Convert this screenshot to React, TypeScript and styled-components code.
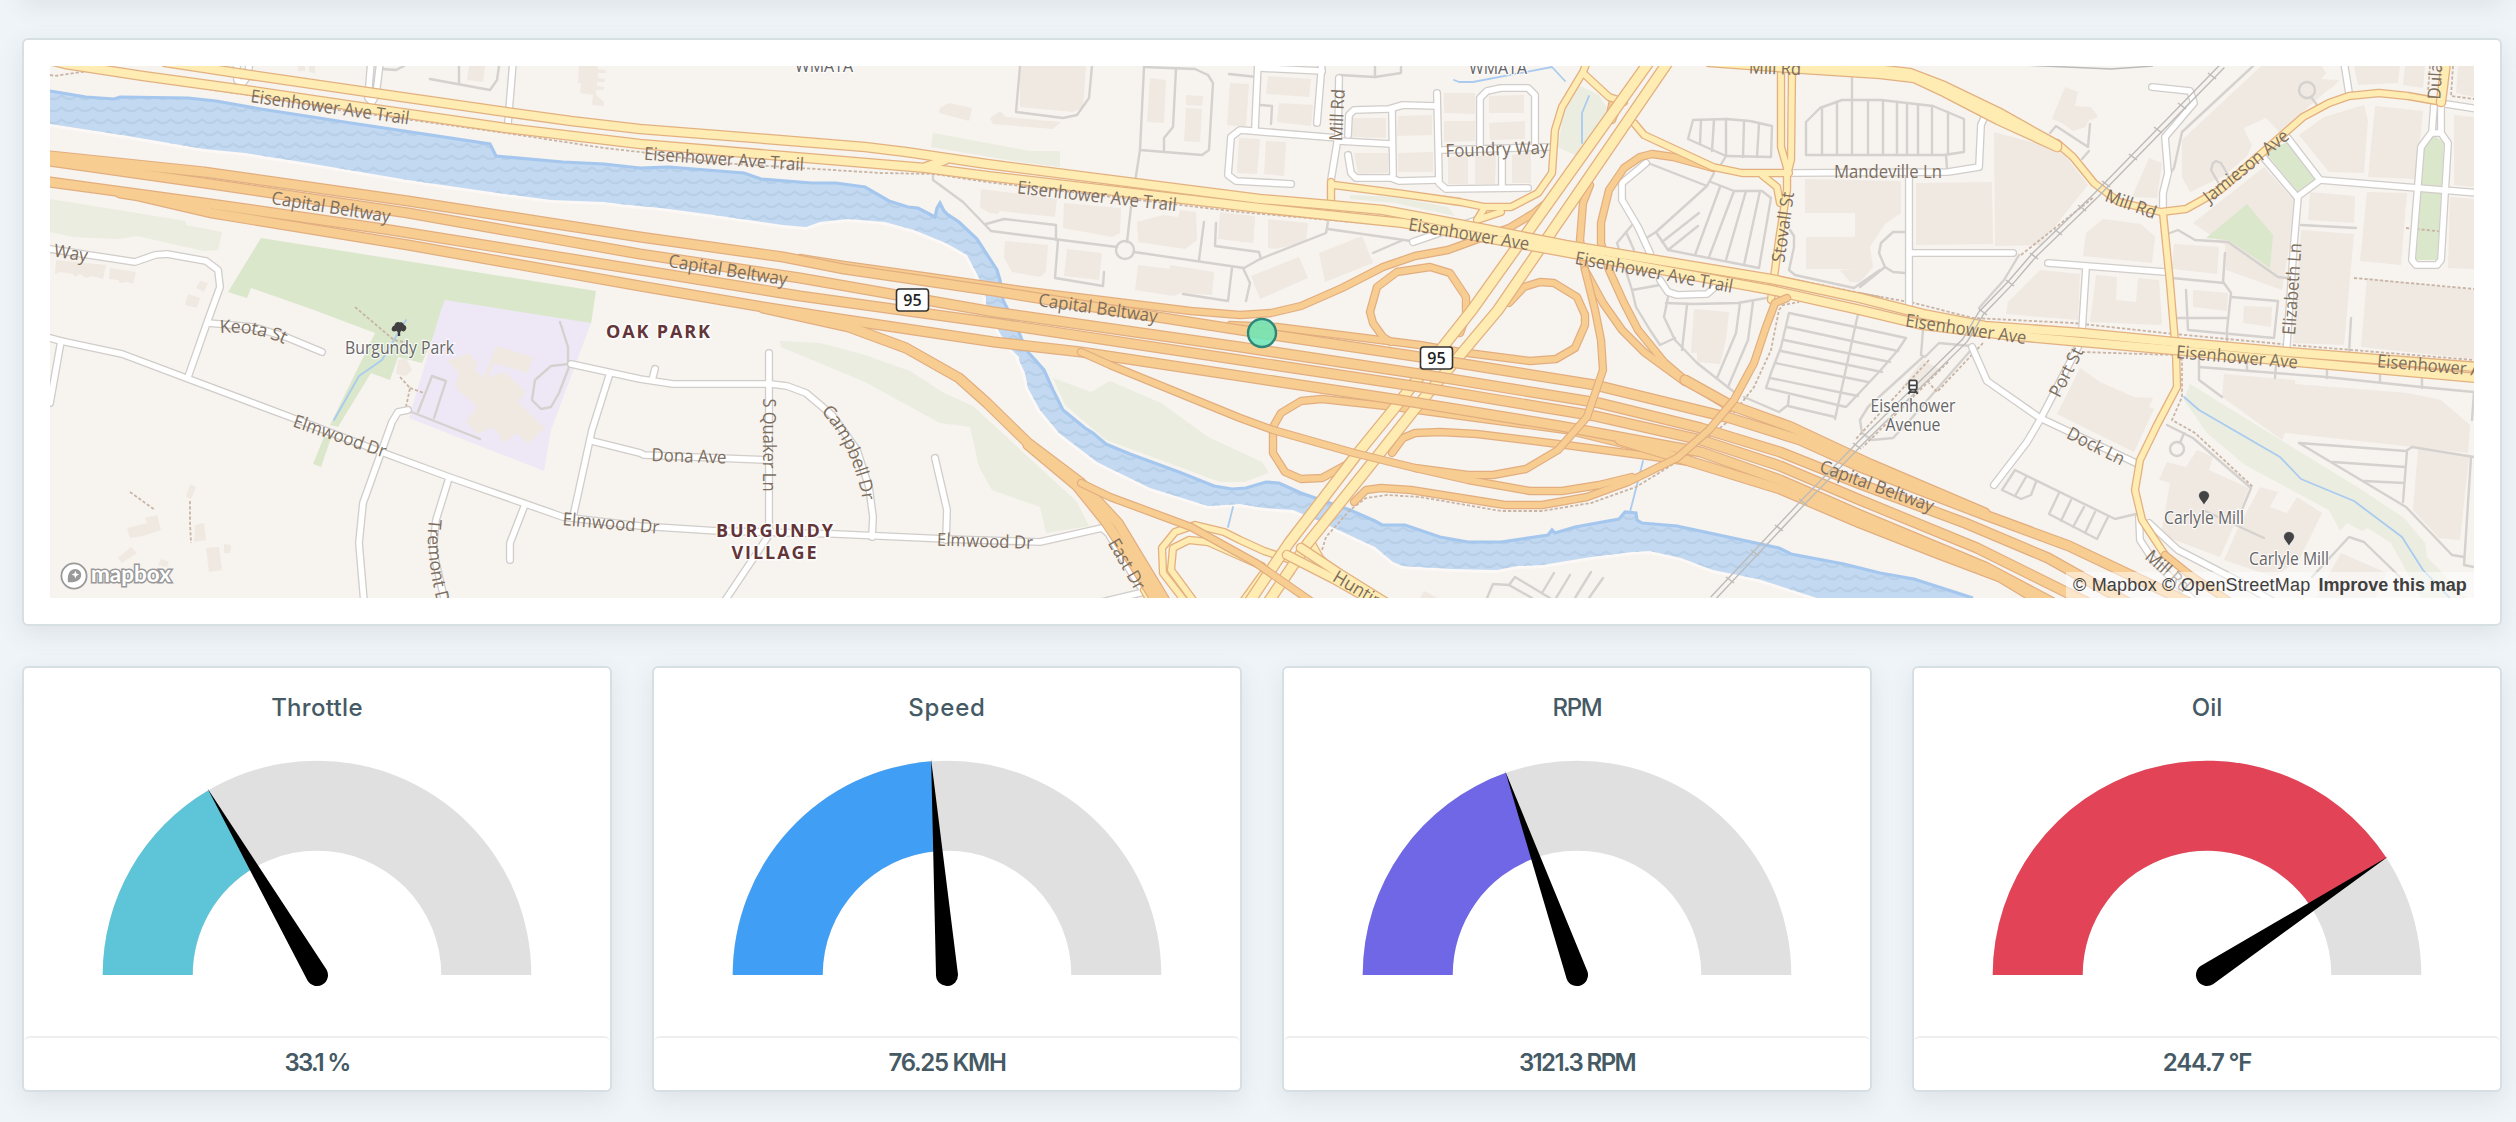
import React from 'react';
import styled, { createGlobalStyle } from 'styled-components';

const GlobalStyle = createGlobalStyle`
  *, *::before, *::after { box-sizing: border-box; }
  html, body { margin: 0; padding: 0; }
  body { background: #eff4f8; font-family: Inter, 'Open Sans', sans-serif; color: #455a64; }
`;

const Page = styled.main`
  display: flex;
  flex-direction: column;
  gap: 40px;
  height: 1122px;
  padding: 0 14px 0 22px;
  overflow: hidden;
`;

const Card = styled.section`
  width: 2480px;
  flex: none;
  background: #fff;
  border: 2px solid #d6dfe3;
  border-radius: 6px;
  box-shadow: 0 8px 24px rgba(69, 80, 90, 0.1);
`;

const PreviousCard = styled(Card)`
  height: 120px;
  margin-top: -122px;
`;

const MapCard = styled(Card)`
  height: 588px;
  padding: 26px;
`;

const MapFrame = styled.div`
  position: relative;
  height: 532px;
  overflow: hidden;
  background: #f7f3ef;
`;

const MapSvg = styled.svg`
  display: block;
  width: 2424px;
  height: 532px;
`;

const Attribution = styled.div`
  position: absolute;
  right: 0;
  bottom: 0;
  display: flex;
  align-items: center;
  gap: 8px;
  width: 408px;
  height: 26px;
  padding: 0 7px;
  background: rgba(255, 255, 255, 0.5);
  font: 18px/26px 'Liberation Sans', Arial, sans-serif;
  color: #404040;
  white-space: nowrap;
`;

const Credits = styled.span`
  letter-spacing: 0.2px;
`;

const Improve = styled.b`
  letter-spacing: -0.05px;
`;

const GaugeRow = styled.div`
  display: grid;
  grid-template-columns: repeat(4, 590px);
  gap: 40px;
`;

const GaugeCard = styled(Card)`
  display: flex;
  flex-direction: column;
  width: 590px;
  height: 426px;
`;

const GaugeTitle = styled.h2<{ $spacing: number }>`
  margin: 0;
  padding-top: 23px;
  font-size: 24px;
  line-height: 34px;
  font-weight: 450;
  text-align: center;
  letter-spacing: ${(p) => p.$spacing}px;
`;

const GaugeBody = styled.div`
  flex: 1;
  display: flex;
  justify-content: center;
`;

const GaugeFooter = styled.footer<{ $spacing: number }>`
  height: 54px;
  border-top: 2px solid #eee;
  border-radius: 6px;
  font-size: 24px;
  line-height: 50px;
  font-weight: 600;
  text-align: center;
  letter-spacing: ${(p) => p.$spacing}px;
`;

/* ---------- map data ---------- */

const WATER_TOP =
  '50,91 86,97 114,99 120,97 188,98 216,101 261,109 351,123 490,144 496,156 563,162 604,164 640,168 669,167 744,173 761,179 812,183 836,183 865,187 889,201 908,207 918,208 935,217 937,208 940,203 944,211 947,214 959,222 977,239 997,270 1000,280 1003,300 1018,330 1022,340 1028,352 1044,370 1053,390 1063,410 1085,428 1093,433 1106,444 1130,454 1179,472 1214,486 1232,489 1246,488 1266,482 1279,483 1301,493 1350,510 1375,521 1382,525 1405,525 1440,537 1468,542 1501,542 1548,535 1552,530 1555,533 1575,527 1619,519 1625,512 1636,513 1637,520 1642,523 1677,526 1705,532 1779,548 1791,554 1844,564 1880,573 1914,579 1973,598';
const WATER_BOTTOM =
  '1817,598 1758,579 1713,570 1681,558 1650,551 1632,552 1591,557 1542,565 1517,566 1497,570 1452,569 1403,566 1393,562 1375,547 1334,528 1317,520 1293,510 1264,508 1240,504 1208,506 1150,488 1097,462 1059,433 1040,410 1028,388 1025,373 1019,360 1019,357 1012,350 1001,335 986,307 986,298 979,278 967,255 946,243 914,230 885,222 848,219 820,222 806,227 783,225 714,215 661,208 620,204 604,202 551,200 498,193 408,180 302,162 245,153 204,149 122,135 50,124';

const WOODS = [
  '50,199 186,221 186,225 222,232 218,250 204,251 137,236 118,239 73,237 50,232',
  '780,341 820,343 865,355 910,371 944,393 973,406 1077,502 1089,526 1046,533 1040,507 992,490 979,467 970,427 940,423 865,382 781,347',
  '1053,378 1091,392 1110,381 1161,403 1208,437 1262,462 1269,473 1244,482 1220,482 1106,440 1065,405',
  '933,133 1030,151 1060,151 1060,167 1020,162 931,147',
  '1350,195 1395,197 1448,207 1455,216 1395,203 1350,199',
  '1580,86 1599,95 1609,112 1579,157 1558,147 1564,110',
  '2190,384 2362,490 2404,518 2425,543 2427,557 2467,598 2421,598 2391,543 2368,528 2362,531 2347,523 2340,531 2329,510 2245,465 2207,433 2184,400',
];

const PARKS = [
  '261,238 596,291 591,324 445,310 422,363 398,357 390,380 371,373 338,427 330,425 375,333 314,310 251,288 247,298 228,292',
  '324,437 331,438 321,467 313,464',
  '2247,204 2273,235 2270,268 2228,240 2206,238',
  '2287,142 2315,180 2298,192 2265,152',
  '2425,143 2435,136 2444,143 2437,260 2416,260',
];

const SCHOOL = '445,300 591,323 551,430 544,471 409,418 441,310';

const BUILDINGS = [
  '459,357 469,353 477,362 475,370 484,378 505,372 526,392 518,402 545,428 528,444 516,433 505,443 493,427 478,434 466,422 477,407 455,387 459,373 447,360',
  '496,346 533,357 528,373 494,363 488,378 484,377',
  '398,360 406,358 412,370 406,376 396,374',
  '127,528 147,523 145,518 157,515 161,530 143,536 130,538',
  '118,558 131,547 137,553 122,563',
  '161,559 169,562 167,567 158,565',
  '190,484 196,487 191,499 186,497',
  '195,525 204,523 206,540 194,542',
  '206,548 219,547 222,570 209,572',
  '224,544 231,545 230,553 224,553',
  '56,260 106,265 103,279 96,277 92,276 86,278 80,274 75,277 73,274 60,272 55,274',
  '110,268 136,272 133,284 128,282 120,283 118,280 109,279',
  '200,281 208,283 204,292 196,288',
  '188,294 200,298 197,308 185,305',
  '469,66 485,66 483,82 467,80',
  '579,66 598,66 598,69 606,70 606,73 598,73 598,78 605,79 605,82 597,82 597,86 604,87 604,90 596,90 596,95 604,102 604,106 592,105 593,95 580,93 581,83 578,83',
  '298,66 305,66 305,71 298,71',
  '309,66 315,66 315,73 309,72',
  '1020,66 1086,66 1083,107 1073,112 1020,107',
  '940,108 949,103 972,108 969,121 939,113',
  '990,118 1000,111 1006,117 1061,122 1053,129 993,124',
  '981,189 1057,199 1055,217 1000,211 998,214 989,213 980,207',
  '1064,203 1121,208 1120,233 1112,237 1063,228',
  '1137,222 1163,215 1178,217 1180,210 1196,212 1197,240 1185,249 1138,242',
  '1220,212 1255,216 1253,243 1218,239',
  '1005,241 1048,245 1046,272 1040,277 1012,272 1004,258',
  '1067,249 1102,253 1099,280 1064,276',
  '1138,265 1170,269 1170,265 1214,272 1212,295 1181,293 1174,296 1135,290',
  '1150,78 1166,80 1164,123 1147,122',
  '1186,95 1203,96 1202,106 1186,105',
  '1186,108 1202,109 1200,142 1184,141',
  '1230,83 1249,84 1246,127 1227,125',
  '1239,138 1260,139 1257,174 1237,173',
  '1268,76 1311,79 1309,97 1266,94',
  '1279,103 1313,105 1311,126 1277,122',
  '1266,141 1286,142 1284,176 1264,174',
  '1353,118 1386,118 1386,138 1352,137',
  '1398,116 1432,115 1432,135 1397,136',
  '1354,153 1388,153 1388,173 1358,174',
  '1398,153 1433,152 1433,172 1398,172',
  '1444,93 1475,93 1475,114 1444,113',
  '1444,121 1475,121 1475,141 1444,142',
  '1489,96 1524,95 1524,113 1489,113',
  '1489,123 1525,121 1525,139 1490,140',
  '1448,157 1468,156 1468,184 1448,184',
  '1475,156 1496,156 1495,184 1475,184',
  '1512,155 1531,152 1531,183 1512,183',
  '1268,219 1308,223 1306,242 1276,249 1268,248',
  '1240,215 1255,217 1253,242 1240,242',
  '1319,253 1362,236 1373,263 1325,282',
  '1251,276 1299,257 1308,278 1260,299',
  '1694,309 1729,312 1726,340 1720,364 1697,362 1697,353 1691,353',
  '1805,179 1901,181 1901,213 1885,224 1870,247 1873,267 1860,282 1850,282 1840,270 1855,269 1855,213 1805,213',
  '1806,237 1855,237 1855,269 1806,269',
  '1916,183 1992,182 1993,244 1916,245',
  '1994,132 2061,150 2088,185 2040,245 1995,246',
  '2065,87 2078,92 2075,106 2091,107 2098,117 2088,121 2086,127 2073,131 2062,123 2052,119',
  '2149,158 2162,163 2157,198 2132,197',
  '2261,66 2322,66 2326,73 2321,79 2339,80 2334,86 2324,93 2303,112 2281,134 2266,118 2244,128 2246,134 2252,145 2247,156 2224,176 2190,192 2182,177 2182,140',
  '2354,66 2400,66 2398,83 2358,85',
  '2405,66 2425,66 2423,88 2403,85',
  '2458,66 2474,66 2474,97 2456,93',
  '2364,105 2368,120 2364,173 2329,172 2299,135 2324,117',
  '2375,106 2423,111 2416,179 2368,177',
  '2454,115 2474,117 2474,187 2454,185',
  '2264,167 2294,200 2289,247 2282,290 2226,270 2225,245 2193,223',
  '2310,192 2355,196 2354,223 2308,220',
  '2367,192 2407,193 2401,265 2360,261',
  '2450,197 2474,199 2474,269 2448,268',
  '2301,230 2354,234 2344,345 2293,343',
  '2367,278 2474,290 2474,359 2361,347',
  '2103,219 2141,224 2155,237 2152,263 2083,256 2086,233',
  '2040,270 2080,274 2078,320 2006,314 2008,302',
  '2096,275 2117,277 2116,300 2136,302 2138,278 2159,280 2162,322 2161,325 2090,322',
  '2174,244 2219,247 2217,274 2172,269',
  '2193,290 2228,293 2227,311 2193,307',
  '2244,306 2272,307 2271,327 2243,323',
  '2080,368 2100,382 2134,397 2153,398 2149,407 2154,409 2134,452 2057,414',
  '2224,374 2295,380 2295,384 2408,393 2441,400 2470,425 2468,453 2285,433 2282,440 2222,397',
  '2418,449 2469,457 2460,540 2439,538 2413,510',
  '2167,462 2186,467 2197,450 2213,457 2209,470 2249,488 2241,508 2232,530 2220,557 2161,535 2170,483 2159,480',
  '2260,487 2278,492 2270,507 2287,513 2297,497 2322,513 2299,560 2274,577 2224,560 2237,530',
  '2341,553 2387,573 2375,598 2316,598',
  '1923,360 1941,370 1919,390 1902,387',
  '1424,591 1438,598 1420,598',
];

const STREAMS = [
  '406,320 394,340 382,360 359,376 334,420',
  '1454,80 1459,82 1473,82 1552,67 1565,81',
  '1589,96 1582,113 1582,143',
  '2184,397 2199,410 2280,457 2301,479 2354,501 2402,537 2423,570 2450,598',
  '1643,461 1630,512',
  '1233,507 1228,527',
];

const SERVICE = [
  '560,322 568,347 568,365',
  '569,364 551,366 535,380 532,400 541,409 551,407 559,393 569,367',
  '409,411 480,439',
  '418,412 432,376 446,381 434,418',
  '1806,155 1806,122 1820,108 1842,100 1881,100 1933,106 1964,119 1964,152 1944,155 1806,155',
  '1822,107 1822,155', '1837,102 1837,155', '1852,78 1852,155', '1868,100 1868,155', '1883,100 1883,155',
  '1897,102 1897,155', '1907,103 1907,155', '1918,105 1918,155', '1932,106 1932,155', '1948,112 1948,154', '1946,155 1947,168',
  '1693,120 1726,119 1750,121 1772,126 1771,157 1726,156 1688,139 1693,120',
  '1701,120 1700,144', '1714,120 1712,151', '1726,119 1726,156', '1744,121 1743,157', '1759,124 1757,157', '1726,156 1720,166',
  '1648,163 1707,186 1714,173',
  '1711,182 1734,191 1762,191 1771,198 1759,268 1668,250 1656,232 1707,186',
  '1695,255 1720,187', '1709,257 1734,191', '1726,260 1746,191', '1744,265 1760,191', '1662,242 1699,213', '1668,250 1698,226',
  '1648,237 1656,232',
  '1632,225 1617,243 1632,290 1636,307 1650,330 1660,345 1675,338',
  '1626,232 1634,250', '1632,290 1660,285',
  '1666,303 1693,304 1738,303 1766,298',
  '1668,297 1664,317 1675,340 1697,363 1734,392',
  '1687,305 1682,350', '1740,303 1736,333 1717,378', '1753,302 1748,340 1728,387',
  '1789,313 1860,328 1906,338 1898,350 1879,372 1846,407 1766,388 1771,373 1781,347 1789,313',
  '1787,327 1898,351', '1784,340 1890,362', '1781,351 1882,372', '1775,363 1868,382', '1770,378 1858,396', '1858,314 1835,419',
  '1744,397 1779,412 1788,405 1789,396', '1788,406 1835,417',
  '1020,66 1016,112 1063,118 1077,115 1089,98 1092,66',
  '1144,67 1140,150 1135,182',
  '1144,67 1195,69 1208,75 1213,83 1209,150 1202,155 1140,150',
  '1176,69 1173,127 1164,138 1164,150',
  '933,174 933,180 963,202 991,231 1117,247',
  '986,224 1004,219 1056,225 1056,240',
  '1058,240 1055,278 1103,286 1104,272',
  '1131,207 1127,242', '1134,252 1244,268 1260,259 1326,233 1328,222',
  '1204,222 1199,260', '1216,223 1215,246 1259,252 1261,259',
  '1328,229 1411,241', '1403,240 1373,253',
  '1232,268 1228,301 1183,294', '1243,268 1250,283 1246,301',
  '1229,74 1257,77', '1260,105 1272,106 1271,124',
  '1339,75 1375,77 1401,73 1401,67', '1375,66 1375,77',
  '459,66 459,83', '430,79 490,90 497,80 499,66', '382,69 396,70 404,66',
  '1790,230 1794,236 1794,247 1789,270 1795,275 1854,288 1880,270',
  '1905,232 1893,232 1881,243 1879,253 1885,267 1893,272 1905,273', '1885,267 1860,287',
  '2253,66 2182,132 2174,168 2171,172',
  '2050,133 2056,126 2088,147 2090,124', '2089,151 2082,159',
  '2311,97 2317,105', '2218,182 2211,170 2213,163 2216,161 2221,163 2228,175',
  '2170,233 2178,230 2195,240 2228,242 2278,277 2287,278',
  '2172,278 2224,283 2231,293 2227,330 2227,343', '2225,253 2223,283',
  '2231,297 2278,301 2274,338 2188,330 2186,290', '2176,318 2228,318', '2301,225 2356,228', '2351,318 2349,353',
  '2019,255 2004,280 1979,308',
  '2199,360 2199,380 2222,397', '2199,367 2326,377 2421,387 2474,392',
  '2247,363 2247,371', '2276,365 2275,378', '2327,368 2327,378', '2380,375 2380,382', '2422,378 2422,388',
  '2167,425 2193,438 2251,488 2241,512', '2180,443 2184,433',
  '2203,510 2264,538',
  '2299,443 2406,507 2452,555 2464,557', '2299,443 2406,451 2412,447 2474,457',
  '2333,462 2405,467', '2364,481 2404,483', '2407,451 2403,502', '2471,457 2464,565 2474,567',
  '2474,392 2472,420',
  '2312,577 2349,537 2364,542 2400,577',
  '2015,470 2115,519 2136,514', '2015,470 2002,490 2021,499 2031,495 2036,482', '2026,477 2015,496',
  '2059,493 2049,514 2097,539 2108,517', '2071,500 2061,521', '2084,507 2073,527', '2095,512 2085,533',
  '1923,330 1921,355 1925,357 1939,343 1971,346',
  '1971,350 1910,420 1893,438 1872,440 1862,433 1860,420 1868,407 1923,357',
  '1487,598 1493,584 1509,585 1515,577 1550,598', '1554,573 1542,593', '1570,575 1556,598', '1591,572 1575,598', '1603,578 1589,598', '1509,585 1532,598',
];

const SERVICE_LOOPS: [number, number, number][] = [
  [1125, 250, 9],
  [2307, 90, 8],
  [2177, 449, 7],
];

const TRAILS = [
  '50,75 55,76 88,71 261,97 339,110 506,133 604,148 640,152 720,163 881,173 934,174 987,182 1240,212 1330,220 1411,227',
  '1781,277 1880,297',
  '1860,293 1914,303 1973,318 2073,323 2165,333 2291,345 2474,360',
  '1322,550 1326,537 1350,510 1366,498 1387,495 1420,497 1501,511 1542,511 1591,503 1636,487 1685,457 1726,423 1754,387 1771,350 1779,310 1783,305 1799,302',
  '1271,598 1295,572',
  '2082,352 2174,355 2182,360 2182,397 2172,420 2195,433 2253,487',
  '2021,255 2094,197', '2354,278 2474,289', '2406,228 2447,232',
  '2453,66 2451,96 2474,99', '2430,66 2428,91',
  '355,307 394,340 404,342', '400,377 410,388 406,407', '410,388 424,393',
  '130,492 155,510', '190,501 190,523 191,543',
  '1983,343 1937,392 1929,383', '1929,360 1855,440', '1948,362 1863,447',
];

const RAIL = '2222,66 2096,195 2034,255 2010,283 1981,313 1965,340 1860,443 1803,502 1713,598';
const RAIL_TIES: [number, number][] = [
  [2212, 76], [2182, 106], [2158, 130], [2133, 157], [2106, 184], [2082, 208], [2058, 232], [2034, 256], [2010, 283], [1983, 312], [1857, 446], [1803, 502], [1779, 528], [1755, 553], [1730, 580],
];

const STREETS = [
  '50,249 135,262 155,255 167,254 206,261 218,270 220,287 208,320 188,377',
  '50,338 61,341 122,354 298,420 384,453 449,477 563,517 640,526 718,531 836,534 946,539 1040,542 1102,528 1108,533 1134,577 1144,592 1102,602',
  '61,341 50,403',
  '208,323 253,327 286,337 322,352',
  '408,410 398,412 392,422 363,503 359,543 364,602',
  '449,478 436,520 433,550 445,602',
  '524,507 510,543 510,560',
  '571,364 640,379 673,384 771,384 787,386 806,393 832,415 857,450 869,487 873,517 872,537',
  '610,373 592,430 573,517',
  '592,441 640,453 644,455 693,457 767,460',
  '769,353 769,527', '655,369 652,380', '767,538 724,602', '935,458 947,510 946,540',
  '237,62 237,80 242,84 247,77 250,62', '371,62 368,98 372,102 376,95 380,62', '513,62 508,123',
  '1339,78 1338,137 1331,180',
  '1338,138 1240,130 1231,137 1228,175 1236,181 1291,184',
  '1258,62 1255,128', '1260,68 1322,71', '1322,62 1317,123', '1338,141 1391,144',
  '1348,135 1349,115 1354,110 1389,109 1403,105 1436,106',
  '1392,110 1393,175',
  '1348,155 1351,173 1356,178 1391,178 1399,181 1438,180',
  '1437,93 1439,183 1446,189 1528,188', '1442,150 1548,147',
  '1480,147 1480,98 1487,91 1501,88 1528,88 1535,95 1535,148', '1502,148 1502,187',
  '1413,242 1477,220',
  '1646,163 1622,183 1622,200 1638,227 1650,253', '1660,280 1668,292 1677,295 1707,294 1715,287',
  '1791,173 1948,172 1979,167 1981,125 1988,109',
  '1909,177 1909,307', '1910,253 2013,253', '2048,263 2165,272',
  '2086,268 2082,330 2080,343 2040,420 2027,442 1994,485',
  '1972,347 1987,381 2040,418 2138,464',
  '2152,87 2190,91 2194,103 2165,137 2168,173 2163,193 2163,210',
  '2344,62 2349,93', '2446,104 2478,109',
  '2287,137 2320,180 2478,193', '2264,158 2297,197 2320,180', '2298,197 2294,243 2286,357',
  '2434,105 2432,132 2421,147 2412,260 2416,265 2437,265 2441,260 2448,143 2441,133 2441,105', '2432,133 2441,133',
  '2139,517 2140,540 2153,560 2195,602', '2149,523 2178,550 2236,580 2274,602',
];

const LOWER_RAMPS = [
  '1391,342 1383,337 1373,323 1370,312 1377,287 1397,272 1430,267 1450,273 1466,297 1466,317 1460,333',
  '1230,325 1277,327 1420,345 1460,352 1530,361 1556,359 1575,348 1585,325 1585,315 1577,297 1554,283 1540,282 1524,287 1509,303',
  '800,258 844,265 930,277 1028,291 1191,311 1240,315 1271,313 1301,306 1342,288 1383,267 1415,256 1448,250 1481,238 1509,228 1534,213 1550,200 1587,147 1609,120 1613,100',
  '1689,458 1648,450 1566,430 1469,417 1395,407 1322,399 1301,401 1281,413 1273,427 1273,453 1285,472 1301,479 1322,478 1346,465 1360,450',
  '1690,462 1648,456 1566,445 1477,434 1440,432 1415,433 1403,438 1392,453',
  '1713,168 1673,157 1652,154 1640,157 1624,168 1609,190 1601,223 1601,243 1609,270 1624,303 1638,330 1664,362 1685,380 1730,408',
  '1590,185 1583,203 1580,240 1585,270 1603,303 1622,330 1644,352 1685,382',
];

const YELLOW_MINOR = [
  '1334,185 1403,194 1460,202 1485,207 1511,207 1538,193 1552,173 1555,130 1562,107 1583,72 1587,62',
  '1331,182 1331,213', '1485,207 1477,220 1501,212',
  '1583,73 1609,97 1624,102', '1612,120 1620,100',
  '1634,123 1644,135 1713,167 1742,173 1789,173',
  '1781,72 1781,147 1787,168 1787,190 1779,240 1771,300', '1792,72 1791,160 1787,175',
  '1762,175 1777,187 1780,203',
  '2057,143 2073,157 2094,183 2119,202 2161,212 2186,209 2220,190 2303,117 2329,103 2349,96 2379,93 2408,96 2442,102',
  '2163,213 2170,283 2174,330 2176,353 2177,387 2157,425 2140,460 2135,490 2142,520 2165,555',
  '1300,563 1264,551 1240,540 1224,532 1195,525 1175,532 1162,548 1163,573 1187,604',
  '1262,566 1253,562 1208,542 1189,540 1173,548 1171,570 1196,604',
  '1310,540 1320,558 1334,572', '1144,590 1152,604', '1241,604 1262,575',
];

const YELLOW_MAJOR = [
  '1709,62 1803,69 1880,74 1914,78 1944,92 1998,120 2057,147',
  '1709,58 1803,65 1875,69 1910,73 1944,86 1998,112 2057,145',
  '1287,555 1334,579 1378,604',
  '1301,548 1340,574 1385,602',
  '2441,102 2446,62',
  '165,62 237,73 367,92 506,112 571,121 640,129 742,137 865,147 906,152 987,164 1260,199 1330,205 1383,210 1485,229 1566,245 1771,279 1860,298 1923,314 1985,326 2082,333 2174,342 2287,352 2478,367',
  '50,60 65,64 143,76 245,90 367,108 506,128 640,144 783,156 926,168 987,176 1260,208 1403,223 1526,245 1771,290 1860,310 1923,325 2006,335 2082,342 2174,350 2287,361 2478,378',
  '926,167 945,160',
];

const TELEGRAPH_ROAD = [
  '1649,62 1472,310 1393,410 1358,453 1289,543 1248,604',
  '1668,62 1498,310 1414,410 1380,453 1308,543 1267,604',
];

const BELTWAY = [
  '40,155 50,156 204,172 408,201 640,237 783,257 844,269 994,291 1100,308 1240,330 1420,357 1595,385 1730,418 1800,440 1860,467 1985,515 2069,546 2200,608',
  '40,160 50,161 204,183 408,213 640,254 800,278 994,312 1240,347 1420,374 1599,403 1701,428 1780,452 1860,484 1965,523 2048,558 2130,604',
  '40,180 50,182 204,203 384,229 640,270 800,296 994,323 1240,360 1420,387 1595,416 1701,440 1780,466 1860,500 1977,548 2090,604',
  '120,193 139,196 212,213 408,245 640,286 763,307 840,319 994,342 1081,352 1240,376 1400,400 1560,426 1701,452 1780,480 1860,515 1985,567 2055,604',
  '1620,440 1689,461 1780,489 1860,523 1939,554 2000,577 2045,604',
  '1685,380 1730,405 1791,427 1870,464 1985,513',
  '763,308 849,327 906,348 959,378 987,403 1028,443 1081,483 1118,523 1167,604',
  '1028,445 1077,486 1106,522 1135,566 1158,604',
];

const UPPER_RAMPS = [
  '1081,352 1110,365 1240,418 1273,430 1354,453 1415,468 1468,475 1493,475 1526,469 1558,450 1587,417 1603,370 1601,340 1595,310 1585,270',
  '1415,468 1468,480 1530,491 1562,491 1599,485 1632,477',
  '1354,502 1366,490 1381,488 1411,490 1505,505 1542,505 1587,497 1628,482 1677,458 1709,430 1734,400 1754,363 1766,327 1771,314 1775,303 1787,298',
  '1081,483 1110,497 1191,527 1256,563 1312,602',
  '2165,555 2190,575 2230,602',
];

type Label = [text: string, x: number, y: number, angle: number, length: number];

const ROAD_LABELS: Label[] = [
  ['Eisenhower Ave Trail', 330, 107, 8, 160],
  ['Eisenhower Ave Trail', 724, 159, 4, 160],
  ['Eisenhower Ave Trail', 1097, 196, 6.4, 160],
  ['Eisenhower Ave', 1469, 234, 9.5, 122],
  ['Eisenhower Ave Trail', 1654, 272, 10.4, 160],
  ['Eisenhower Ave', 1966, 329, 8.4, 122],
  ['Eisenhower Ave', 2237, 357, 5, 122],
  ['Eisenhower Ave', 2438, 366, 5, 122],
  ['Capital Beltway', 331, 207, 9, 120],
  ['Capital Beltway', 728, 270, 9, 120],
  ['Capital Beltway', 1098, 308, 8, 120],
  ['Capital Beltway', 1877, 486, 20, 120],
  ['Way', 71, 253, 9, 34],
  ['Elmwood Dr', 340, 436, 19, 97],
  ['Elmwood Dr', 611, 523, 5, 97],
  ['Elmwood Dr', 985, 541, 2, 96],
  ['Dona Ave', 689, 456, 2, 75],
  ['S Quaker Ln', 769, 445, 90, 93],
  ['East Dr', 1127, 564, 60, 56],
  ['Huntington Ave', 1388, 607, 31, 124],
  ['Mill Rd', 1337, 115, -87, 52],
  ['Foundry Way', 1497, 149, -2, 103],
  ['Mill Rd', 1775, 68, 2, 52],
  ['Stovall St', 1783, 227, -82, 71],
  ['Mandeville Ln', 1888, 172, 0, 108],
  ['Mill Rd', 2131, 204, 20, 53],
  ['Jamieson Ave', 2246, 166, -39, 104],
  ['Elizabeth Ln', 2292, 289, -86, 92],
  ['Dulany St', 2436, 62, -87, 75],
  ['Port St', 2066, 372, -63, 53],
  ['Dock Ln', 2096, 446, 27, 62],
  ['Mill Rd', 2168, 571, 42, 53],
];

const CURVED_LABELS = [
  { id: 'keota', text: 'Keota St', d: 'M220,333 Q254,330 286,345 L310,356', spacing: -0.5 },
  { id: 'tremont', text: 'Tremont Dr', d: 'M429,519 Q423,562 448,640', spacing: -0.4 },
  { id: 'campbell', text: 'Campbell Dr', d: 'M821,412 Q850,442 862,496 L866,520', spacing: -0.5 },
];

const POI_LABELS: Label[] = [
  ['WMATA', 824, 65.5, 0, 58],
  ['WMATA', 1498, 68, 0, 58],
  ['Burgundy Park', 399.5, 348, 0, 109],
  ['Eisenhower', 1913, 405.5, 0, 85],
  ['Avenue', 1913, 425, 0, 55],
  ['Carlyle Mill', 2204, 517.5, 0, 80],
  ['Carlyle Mill', 2289, 558.5, 0, 80],
];

const PLACE_LABELS: Label[] = [
  ['OAK PARK', 658, 332, 0, 104],
  ['BURGUNDY', 774.5, 531, 0, 117],
  ['VILLAGE', 774, 553, 0, 85],
];

/* ---------- map parts ---------- */

const Road = styled.polyline<{ $color: string; $width: number }>`
  fill: none;
  stroke: ${(p) => p.$color};
  stroke-width: ${(p) => p.$width}px;
  stroke-linecap: round;
  stroke-linejoin: round;
`;

const Trail = styled.polyline`
  fill: none;
  stroke: #c8b5a6;
  stroke-width: 1.8px;
  stroke-dasharray: 3.2 2;
`;

const RoadText = styled.text`
  font: 18px 'Open Sans', 'Noto Sans', sans-serif;
  fill: #7d6e5e;
  text-anchor: middle;
`;

const CurvedText = styled(RoadText)<{ $spacing: number }>`
  text-anchor: start;
  letter-spacing: ${(p) => p.$spacing}px;
`;

const PoiText = styled(RoadText)`
  font-weight: 500;
  fill: #666;
  stroke: rgba(255, 255, 255, 0.8);
  stroke-width: 2.4px;
  paint-order: stroke;
`;

const PlaceText = styled(RoadText)`
  font-weight: 700;
  fill: #633538;
  stroke: rgba(255, 255, 255, 0.9);
  stroke-width: 3px;
  paint-order: stroke;
`;

const ShieldText = styled.text`
  font: 600 16px 'Open Sans', 'Noto Sans', sans-serif;
  fill: #222;
  text-anchor: middle;
`;

const LogoText = styled.text`
  font: 700 22px Lato, 'Noto Sans', sans-serif;
  fill: #fff;
  stroke: #999;
  stroke-width: 3px;
  paint-order: stroke;
`;

interface RoadsProps {
  lines: string[];
  color: string;
  casing: string;
  width: number;
  edge: number;
}

function Roads({ lines, color, casing, width, edge }: RoadsProps) {
  return (
    <g>
      {lines.map((l, i) => (
        <Road key={`c${i}`} points={l} $color={casing} $width={width + edge * 2} />
      ))}
      {lines.map((l, i) => (
        <Road key={`f${i}`} points={l} $color={color} $width={width} />
      ))}
    </g>
  );
}

function Areas({ shapes, fill }: { shapes: string[]; fill: string }) {
  return (
    <g fill={fill}>
      {shapes.map((s, i) => (
        <polygon key={i} points={s} />
      ))}
    </g>
  );
}

interface LabelsProps {
  items: Label[];
  as: typeof RoadText;
  adjust?: 'spacing' | 'spacingAndGlyphs';
}

function Labels({ items, as: Text, adjust = 'spacingAndGlyphs' }: LabelsProps) {
  return (
    <g>
      {items.map(([text, x, y, angle, length], i) => (
        <Text key={i} transform={`translate(${x} ${y}) rotate(${angle})`} y={6.3} textLength={length} lengthAdjust={adjust}>
          {text}
        </Text>
      ))}
    </g>
  );
}

function Shield({ x, y }: { x: number; y: number }) {
  return (
    <g transform={`translate(${x} ${y})`}>
      <rect x={-16} y={-11} width={32} height={22} rx={3} fill="#fff" stroke="#333" strokeWidth={1.6} />
      <ShieldText y={5.8}>95</ShieldText>
    </g>
  );
}

function Pin({ x, y }: { x: number; y: number }) {
  return <path transform={`translate(${x} ${y})`} d="M0 7.5C-1.5 3.5-5.5 1-5.5-2.2A5.5 5.3 0 0 1 5.5-2.2C5.5 1 1.5 3.5 0 7.5Z" fill="#444" stroke="#fff" strokeOpacity={0.7} strokeWidth={1} />;
}

function StreetMap() {
  const motorway = { color: '#f7cd92', casing: '#e2ae7f', edge: 1.2 };
  const primary = { color: '#feecb3', casing: '#e3b17f', edge: 1.3 };
  return (
    <MapSvg viewBox="50 66 2424 532">
      <defs>
        <pattern id="waves" width="15.6" height="12" patternUnits="userSpaceOnUse" x="7" y="104">
          <path d="M-2 5.4Q0 7.6 2.6 7 L7.8 3.6L13 7Q15.6 7.6 17.6 5.4" fill="none" stroke="#b8cfe8" strokeWidth="2.2" />
        </pattern>
      </defs>
      <rect x="50" y="66" width="2424" height="532" fill="#f7f3ef" />
      <Areas shapes={WOODS} fill="#ebede0" />
      <Areas shapes={PARKS.slice(0, 2)} fill="#dae7cb" />
      <polygon points={SCHOOL} fill="#eee8f6" />
      <Areas shapes={BUILDINGS} fill="#f0e9e2" />
      <Areas shapes={PARKS.slice(2)} fill="#dae7cb" />
      <polyline points={WATER_BOTTOM} fill="none" stroke="#fbf8f6" strokeWidth={6} />
      <polygon points={`${WATER_TOP} ${WATER_BOTTOM}`} fill="#c2d9f1" />
      <polygon points={`${WATER_TOP} ${WATER_BOTTOM}`} fill="url(#waves)" />
      <polyline points={WATER_TOP} fill="none" stroke="#a5c7ee" strokeWidth={3.2} />
      {STREAMS.map((s) => (
        <Road key={s} points={s} $color="#a9cbf0" $width={1.8} />
      ))}
      {SERVICE.map((s) => (
        <Road key={s} points={s} $color="#d4d1ce" $width={2.4} />
      ))}
      {SERVICE_LOOPS.map(([x, y, r]) => (
        <circle key={x} cx={x} cy={y} r={r} fill="none" stroke="#d4d1ce" strokeWidth={2.4} />
      ))}
      {TRAILS.map((t) => (
        <Trail key={t} points={t} />
      ))}
      <Roads lines={STREETS} color="#fff" casing="#d0cdca" width={5.6} edge={1.3} />
      <Roads lines={LOWER_RAMPS} {...motorway} width={6} />
      <Roads lines={YELLOW_MINOR} {...primary} width={5.8} />
      <Roads lines={TELEGRAPH_ROAD} {...primary} width={9.4} />
      <Roads lines={YELLOW_MAJOR} {...primary} width={8} />
      <Roads lines={BELTWAY} {...motorway} width={8.8} />
      <Roads lines={UPPER_RAMPS} {...motorway} width={6} />
      <g stroke="#bdbbb9" strokeWidth={1.4} fill="none">
        <polyline points={RAIL} transform="translate(-2.2 -1)" />
        <polyline points={RAIL} transform="translate(2.4 1.4)" />
        <polyline points="2021,65 2066,67 2111,69 2153,66" />
        {RAIL_TIES.map(([x, y]) => (
          <line key={x} x1={x - 4} y1={y - 3} x2={x + 4} y2={y + 3} />
        ))}
      </g>

      <Labels items={ROAD_LABELS} as={RoadText} />
      {CURVED_LABELS.map((c) => (
        <g key={c.id}>
          <path id={c.id} d={c.d} fill="none" />
          <CurvedText $spacing={c.spacing}>
            <textPath href={`#${c.id}`}>{c.text}</textPath>
          </CurvedText>
        </g>
      ))}
      <Labels items={POI_LABELS} as={PoiText} />
      <Labels items={PLACE_LABELS} as={PlaceText} adjust="spacing" />

      <g transform="translate(399 329)" fill="#3f3f3f">
        <path d="M-7 1.5C-8 -1-6-3.5-4.5-3.6C-4.5-6-1.5-7.6 .5-6.6C3-7.6 5-5.6 5-3.9C7.5-3.5 8 0 6.4 1.2C5 3 3 2.6 2.4 1.6L1.2 3.2V7H-1.2V3.2L-2.6 1.8C-4 3-6 2.8-7 1.5Z" />
      </g>
      <g transform="translate(1913 386.5)" stroke="#444" strokeWidth={1.8} fill="none">
        <rect x="-3.8" y="-6.2" width="7.6" height="9.4" rx="1.6" fill="#fff" />
        <path d="M-3.8-1.2H3.8M-2 3.4L-4.6 7.4M2 3.4L4.6 7.4M-3 5.6H3" />
      </g>
      <Pin x={2204} y={498} />
      <Pin x={2289} y={539} />
      <Shield x={912.5} y={300} />
      <Shield x={1436.5} y={358} />
      <circle cx={1262} cy={333} r={14} fill="#6ce5b6" fillOpacity={0.86} stroke="#2f8577" strokeWidth={2.4} />

      <g transform="translate(74 576)">
        <circle r={12.6} fill="#fff" stroke="#999" strokeWidth={1.8} />
        <path d="M-6 6.2C-7-2-4-7 1.5-7A5.8 5.8 0 0 1 7.2-1C7.2 4 2 7-6 6.2Z" fill="#999" />
        <path d="M1.4-5.2L2.5-2.5L5.2-1.4L2.5-.3L1.4 2.4L.3-.3L-2.4-1.4L.3-2.5Z" fill="#fff" />
      </g>
      <LogoText x={91} y={582} textLength={80} lengthAdjust="spacingAndGlyphs">
        mapbox
      </LogoText>
    </MapSvg>
  );
}

/* ---------- gauges ---------- */

interface GaugeData {
  title: string;
  value: string;
  ratio: number;
  color: string;
  titleSpacing: number;
  valueSpacing: number;
}

const GAUGES: GaugeData[] = [
  { title: 'Throttle', value: '33.1 %', ratio: 0.331, color: '#5ec4d8', titleSpacing: 0.3, valueSpacing: -1.8 },
  { title: 'Speed', value: '76.25 KMH', ratio: 0.4766, color: '#419ef5', titleSpacing: 0.8, valueSpacing: -1.3 },
  { title: 'RPM', value: '3121.3 RPM', ratio: 0.3922, color: '#6f67e6', titleSpacing: -1.3, valueSpacing: -1.6 },
  { title: 'Oil', value: '244.7 °F', ratio: 0.8157, color: '#e24357', titleSpacing: 0, valueSpacing: -1.2 },
];

const OUTER = 214.3;
const INNER = 124.3;

function ring(from: number, to: number) {
  const at = (ratio: number, r: number) => {
    const a = Math.PI * (1 - ratio);
    return `${(r * Math.cos(a)).toFixed(2)} ${(-r * Math.sin(a)).toFixed(2)}`;
  };
  return `M${at(from, OUTER)}A${OUTER} ${OUTER} 0 0 1 ${at(to, OUTER)}L${at(to, INNER)}A${INNER} ${INNER} 0 0 0 ${at(from, INNER)}Z`;
}

function Gauge({ title, value, ratio, color, titleSpacing, valueSpacing }: GaugeData) {
  return (
    <GaugeCard>
      <GaugeTitle $spacing={titleSpacing}>{title}</GaugeTitle>
      <GaugeBody>
        <svg width={440} height={300} viewBox="-220 -250 440 300">
          <path d={ring(0, 1)} fill="#e0e0e0" />
          <path d={ring(0, ratio)} fill={color} />
          <g transform={`rotate(${ratio * 180})`}>
            <path d="M-216.5 0L0 -11A11 11 0 0 1 0 11Z" />
          </g>
        </svg>
      </GaugeBody>
      <GaugeFooter $spacing={valueSpacing}>{value}</GaugeFooter>
    </GaugeCard>
  );
}

export default function App() {
  return (
    <>
      <GlobalStyle />
      <Page>
        <PreviousCard />
        <MapCard>
          <MapFrame>
            <StreetMap />
            <Attribution>
              <Credits>© Mapbox © OpenStreetMap</Credits>
              <Improve>Improve this map</Improve>
            </Attribution>
          </MapFrame>
        </MapCard>
        <GaugeRow>
          {GAUGES.map((g) => (
            <Gauge key={g.title} {...g} />
          ))}
        </GaugeRow>
      </Page>
    </>
  );
}
